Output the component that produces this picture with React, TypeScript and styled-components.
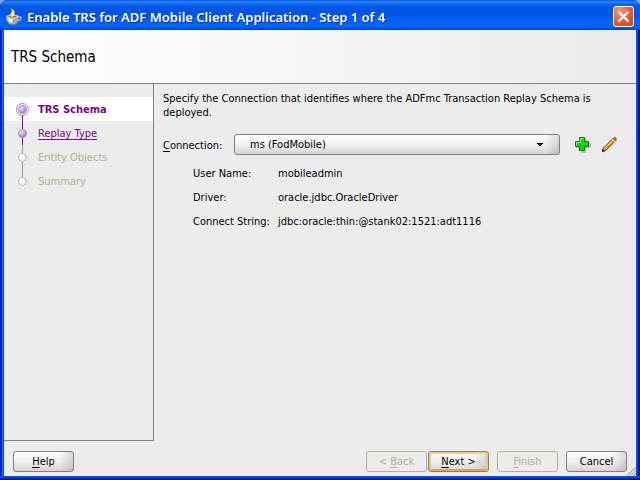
import React from 'react';
import styled, { createGlobalStyle, css } from 'styled-components';

const GlobalStyle = createGlobalStyle`
  *, *::before, *::after { box-sizing: border-box; }
  body {
    margin: 0;
    background: #8f9fe0;
    color: #000;
    font: 11px/14px "DejaVu Sans Condensed", Tahoma, sans-serif;
  }
  button, select { font: inherit; color: inherit; }
  u { text-underline-offset: 2px; }
`;

const Frame = styled.div`
  display: flex;
  flex-direction: column;
  min-height: 100vh;
  padding: 0 4px 4px;
  border-radius: 7px 7px 0 0;
  background:
    linear-gradient(to bottom, #0a50e8 0 1px, #0646e0 1px 2px, #0024b4 2px 3px, #00138c 3px) left bottom / 100% 4px no-repeat,
    linear-gradient(to right, #0019cf 0 1px, #0731d9 1px 2px, #166aee 2px 3px, #0855dd 3px) left top / 4px 100% no-repeat,
    linear-gradient(to right, #0855dd 0 1px, #0441d8 1px 2px, #001ea0 2px 3px, #00138c 3px) right top / 4px 100% no-repeat,
    #0855dd;
`;

const TitleBar = styled.header`
  display: flex;
  align-items: center;
  gap: 5px;
  height: 30px;
  margin: 0 -4px;
  padding: 3px 6px 0 5px;
  border-radius: 7px 7px 0 0;
  background: linear-gradient(
    to bottom,
    #0a4fd6 0, #2a86fa 2px, #0a68f2 4px, #0057e5 7px, #0054e3 14px,
    #0062fa 21px, #0066ff 26px, #0058ea 28px, #0042cc 30px
  );
`;

const Title = styled.h1`
  flex: 1;
  margin: 0;
  color: #fff;
  font: 600 13px/18px "Noto Sans", "Trebuchet MS", sans-serif;
  text-shadow: 1px 1px 0 #0a2a8c;
  white-space: nowrap;
`;

const CloseButton = styled.button`
  display: grid;
  place-items: center;
  width: 21px;
  height: 21px;
  padding: 0;
  border: 1px solid #fff;
  border-radius: 3px;
  background: radial-gradient(circle at 30% 25%, #f09a80, #e3603c 50%, #cf3c12);
`;

const PageHeader = styled.div`
  display: flex;
  align-items: center;
  height: 54px;
  padding: 1px 7px 0;
  border-bottom: 1px solid #808080;
  background: linear-gradient(to right, #fff, #ebebeb);
`;

const PageTitle = styled.h2`
  margin: 0;
  font-size: 15px;
  line-height: 20px;
  font-weight: 400;
`;

const Body = styled.div`
  flex: 1;
  display: flex;
  background: #ececec;
`;

const Steps = styled.nav`
  flex: 0 0 150px;
  padding-top: 13px;
  border: solid #808080;
  border-width: 0 1px 1px 0;
`;

const StepList = styled.ol`
  margin: 0;
  padding: 0;
  list-style: none;
`;

type StepState = 'current' | 'next' | 'disabled';

const Step = styled.li<{ $state: StepState }>`
  display: flex;
  align-items: center;
  gap: 8px;
  height: 24px;
  padding-left: 10px;
  color: ${p => (p.$state === 'disabled' ? '#b0b09c' : '#720a8a')};
  font-weight: ${p => (p.$state === 'current' ? 700 : 400)};
  background: ${p => (p.$state === 'current' ? '#fff' : 'transparent')};
  a { color: inherit; text-underline-offset: 2px; }
  a, span { padding-top: 2px; }
  svg { flex: none; display: block; }
`;

const Content = styled.main`
  flex: 1;
  min-width: 0;
  padding: 8px 18px 0 9px;
`;

const Intro = styled.p`
  margin: 0 0 14px;
  max-width: 440px;
`;

const ConnectionRow = styled.div`
  display: flex;
  align-items: center;
`;

const ConnectionLabel = styled.label`
  flex: 0 0 71px;
  padding-top: 2px;
`;

const SelectBox = styled.div`
  position: relative;
  flex: 1;
  svg { position: absolute; right: 17px; top: 9px; pointer-events: none; }
`;

const raised = css`
  border: 1px solid #808080;
  border-radius: 3px;
  background:
    linear-gradient(to right, transparent calc(100% - 14px), rgba(150, 150, 150, 0.35)),
    linear-gradient(to bottom, #fff, #f0f0f0 50%, #d4d4d4);
`;

const Select = styled.select`
  ${raised}
  display: block;
  width: 100%;
  height: 21px;
  padding: 0 30px 0 15px;
  appearance: none;
`;

const Tools = styled.div`
  display: flex;
  gap: 10px;
  margin-left: 14px;
`;

const IconButton = styled.button`
  width: 17px;
  height: 17px;
  padding: 0;
  border: 0;
  background: none;
  svg { display: block; }
`;

const Details = styled.dl`
  display: grid;
  grid-template-columns: 85px 1fr;
  row-gap: 10px;
  margin: 12px 0 0 30px;
  dt, dd { margin: 0; white-space: nowrap; }
`;

const Footer = styled.footer`
  position: relative;
  display: flex;
  justify-content: space-between;
  padding: 10px 9px 4px;
  background: #ececec;
`;

const ButtonGroup = styled.div<{ $gap: number }>`
  display: flex;
  gap: ${p => p.$gap}px;
`;

const Button = styled.button<{ $primary?: boolean }>`
  ${raised}
  width: 61px;
  height: 21px;
  padding: 0;
  line-height: 14px;
  ${p => p.$primary && css`
    box-shadow: inset 0 2px 0 #f6cd85, inset 2px 0 0 #f3c57a, inset -2px 0 0 #f3c57a, inset 0 -2px 0 #e5a63c;
  `}
  &:disabled {
    border-color: #b0b09c;
    background: #ececec;
    color: #b0b09c;
  }
`;

const Grip = styled.svg`
  position: absolute;
  right: 0;
  bottom: 0;
`;

const CupIcon = () => (
  <svg width="17" height="18" viewBox="0 0 17 18" aria-hidden="true">
    <path d="M7 8C3 5 10 5 6 1C12 3 7 5 10 8" fill="#ffe9a0" stroke="#f8c64c" />
    <ellipse cx="8" cy="15" rx="5" ry="2" fill="#777" />
    <path d="M12 9h3q2 1 0 3l-3 1" fill="none" stroke="#b4b4b4" strokeWidth="1.5" />
    <path d="M1 8q6-3 13 0q0 6-4 8H5Q1 14 1 8" fill="#a7a7a4" />
    <path d="M2 9q2 3 6 1q-1 4 0 5Q2 15 2 9" fill="#e7e7e4" />
    <ellipse cx="7.5" cy="8.5" rx="6" ry="2" fill="#d3d0c8" />
    <ellipse cx="7.5" cy="8.5" rx="4" ry="1" fill="#8f7448" />
    <path d="M6 8q4-1 1-4" fill="none" stroke="#fff1ae" strokeWidth="2" />
  </svg>
);

const CloseIcon = () => (
  <svg width="13" height="13" viewBox="0 0 13 13" aria-hidden="true">
    <path d="M1.5 1.5l10 10M11.5 1.5l-10 10" stroke="#fff" strokeWidth="2.2" />
  </svg>
);

const StepMarker = ({ state, index }: { state: StepState; index: number }) => (
  <svg width="16" height="24" viewBox="0 0 16 24" aria-hidden="true">
    <defs>
      <radialGradient id={`ball${index}`} cx="35%" cy="30%" r="75%">
        <stop offset="0" stopColor={state === 'disabled' ? '#fff' : '#f2e6f7'} />
        <stop offset="1" stopColor={state === 'disabled' ? '#f0f0f0' : '#9d70b4'} />
      </radialGradient>
    </defs>
    {index > 0 && <path d="M8.5 0V8" stroke={index === 1 ? '#720a8a' : '#999'} />}
    {index < 3 && <path d="M8.5 16V24" stroke={index < 2 ? '#720a8a' : '#999'} />}
    {state === 'current' && <circle cx="8.5" cy="12.5" r="6" fill="#fff" stroke="#a67bba" />}
    <circle
      cx="8.5"
      cy="12.5"
      r="4"
      fill={`url(#ball${index})`}
      stroke={state === 'disabled' ? '#b8b8b8' : '#b291c2'}
    />
  </svg>
);

const DownArrow = () => (
  <svg width="6" height="4" viewBox="0 0 6 4" shapeRendering="crispEdges" aria-hidden="true">
    <path d="M0 0h6v1H5v1H4v1H2V2H1V1H0z" fill="#000" />
  </svg>
);

const PlusIcon = () => (
  <svg width="17" height="17" viewBox="0 0 17 17" aria-hidden="true">
    <path d="M7 2h5v5h5v5h-5v5H7v-5H2V7h5z" fill="#bcbcbc" />
    <path d="M5.5 1.5h5v4h4v5h-4v4h-5v-4h-4v-5h4z" fill="#16d316" stroke="#087a08" />
    <path d="M2.5 9.5v-3h4v-4h3" fill="none" stroke="#8df58d" />
  </svg>
);

const PencilIcon = () => (
  <svg width="17" height="17" viewBox="0 0 17 17" aria-hidden="true">
    <path d="M3 16L16 4" stroke="#c4c4c4" strokeWidth="2" />
    <path d="M1.5 15.5L2.5 12L12.5 2Q15 0.500 15 3.500L5 14z" fill="#f5a514" stroke="#6d3a0c" />
    <path d="M3.5 12.5L11.500 4.500" stroke="#ffe58a" />
    <path d="M12 2.5L14 4.500L15 3.500Q15 1 13 1.5z" fill="#dc5a26" />
    <path d="M11 3l3 3" stroke="#d8d8d8" />
    <path d="M1 16v-3l3 2z" fill="#42210a" />
  </svg>
);

const steps: { label: string; state: StepState }[] = [
  { label: 'TRS Schema', state: 'current' },
  { label: 'Replay Type', state: 'next' },
  { label: 'Entity Objects', state: 'disabled' },
  { label: 'Summary', state: 'disabled' },
];

const details = [
  ['User Name:', 'mobileadmin'],
  ['Driver:', 'oracle.jdbc.OracleDriver'],
  ['Connect String:', 'jdbc:oracle:thin:@stank02:1521:adt1116'],
];

export default function App() {
  return (
    <>
      <GlobalStyle />
      <Frame>
        <TitleBar>
          <CupIcon />
          <Title>Enable TRS for ADF Mobile Client Application - Step 1 of 4</Title>
          <CloseButton type="button" aria-label="Close"><CloseIcon /></CloseButton>
        </TitleBar>
        <PageHeader>
          <PageTitle>TRS Schema</PageTitle>
        </PageHeader>
        <Body>
          <Steps aria-label="Wizard steps">
            <StepList>
              {steps.map((s, i) => (
                <Step key={s.label} $state={s.state}>
                  <StepMarker state={s.state} index={i} />
                  {s.state === 'next' ? <a href="#replay-type">{s.label}</a> : <span>{s.label}</span>}
                </Step>
              ))}
            </StepList>
          </Steps>
          <Content>
            <Intro>
              Specify the Connection that identifies where the ADFmc Transaction Replay Schema is deployed.
            </Intro>
            <ConnectionRow>
              <ConnectionLabel htmlFor="connection"><u>C</u>onnection:</ConnectionLabel>
              <SelectBox>
                <Select id="connection" defaultValue="ms">
                  <option value="ms">ms (FodMobile)</option>
                </Select>
                <DownArrow />
              </SelectBox>
              <Tools>
                <IconButton type="button" aria-label="Add connection"><PlusIcon /></IconButton>
                <IconButton type="button" aria-label="Edit connection"><PencilIcon /></IconButton>
              </Tools>
            </ConnectionRow>
            <Details>
              {details.map(([term, value]) => (
                <React.Fragment key={term}>
                  <dt>{term}</dt>
                  <dd>{value}</dd>
                </React.Fragment>
              ))}
            </Details>
          </Content>
        </Body>
        <Footer>
          <Button type="button"><u>H</u>elp</Button>
          <ButtonGroup $gap={8}>
            <ButtonGroup $gap={1}>
              <Button type="button" disabled>&lt; <u>B</u>ack</Button>
              <Button type="button" $primary><u>N</u>ext &gt;</Button>
            </ButtonGroup>
            <Button type="button" disabled><u>F</u>inish</Button>
            <Button type="button">Cancel</Button>
          </ButtonGroup>
          <Grip width="9" height="9" viewBox="0 0 9 9" aria-hidden="true">
            <path d="M0 9L9 0M3 9L9 3M6 9L9 6" stroke="#a8a890" strokeWidth="1.5" />
            <path d="M1.5 9L9 1.5M4.5 9L9 4.5" stroke="#fff" />
          </Grip>
        </Footer>
      </Frame>
    </>
  );
}
